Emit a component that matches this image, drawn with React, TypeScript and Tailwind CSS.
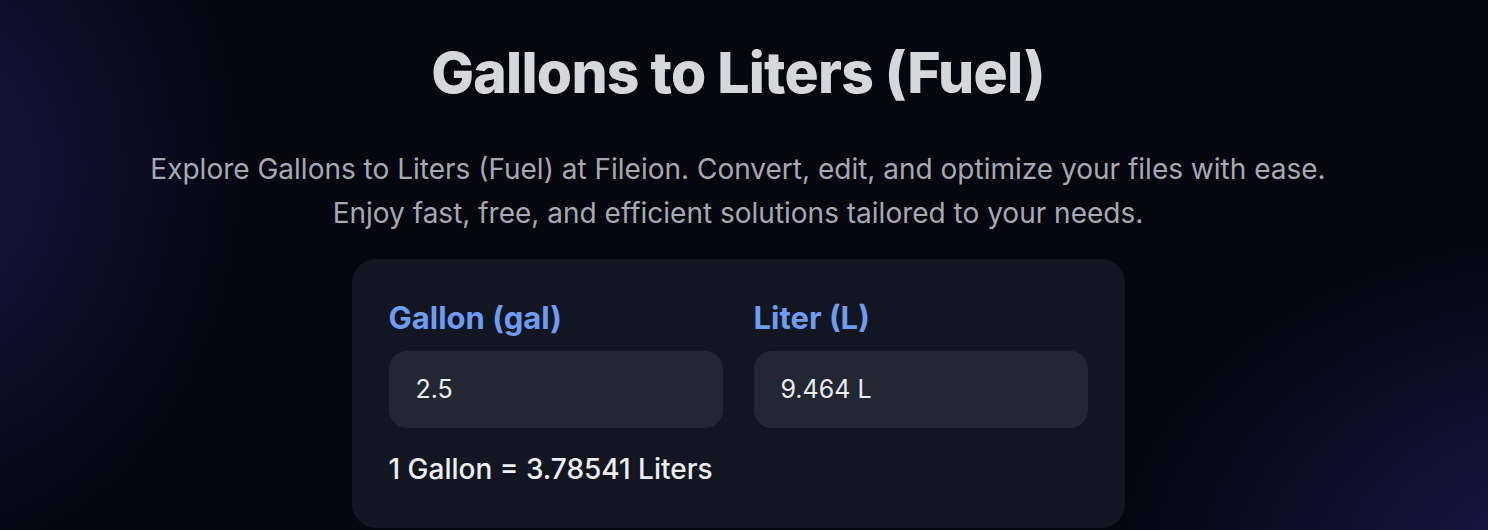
import React from "react";

export default function App() {
  return (
    <div
      className="relative w-full h-[530px] overflow-hidden bg-[#05060f] text-white"
      style={{ fontFamily: "Inter, 'Noto Sans', sans-serif" }}
    >
      <div className="absolute inset-0 bg-[radial-gradient(ellipse_460px_560px_at_-80px_170px,rgba(30,32,95,0.7),transparent_70%)]" />
      <div className="absolute inset-0 bg-[radial-gradient(ellipse_620px_460px_at_1580px_580px,rgba(30,30,92,0.85),transparent_75%)]" />
      <div className="relative flex flex-col items-center pt-[38px] pr-[12px]">
        <h1 className="text-[57px] leading-[70px] font-extrabold text-[#d6d7dd] tracking-[-0.75px]">
          Gallons to Liters (Fuel)
        </h1>
        <p className="mt-[39px] text-[28px] leading-[44px] text-[#a6a9b3] text-center">
          Explore Gallons to Liters (Fuel) at Fileion. Convert, edit, and optimize your files with ease.
          <br />
          Enjoy fast, free, and efficient solutions tailored to your needs.
        </p>
        <div className="mt-[24px] w-[773px] rounded-[24px] bg-[#121621] px-[37px] pt-[39px] pb-[41px]">
          <div className="grid grid-cols-2 gap-x-[31px]">
            <div>
              <div className="text-[31px] leading-[40px] font-bold text-[#6d9cf1]">Gallon (gal)</div>
              <div className="mt-[13px] h-[77px] rounded-[18px] bg-[#222733] flex items-center px-[27px] text-[25px] text-[#eceef2]">
                2.5
              </div>
            </div>
            <div>
              <div className="text-[31px] leading-[40px] font-bold text-[#6d9cf1]">Liter (L)</div>
              <div className="mt-[13px] h-[77px] rounded-[18px] bg-[#222733] flex items-center px-[27px] text-[25px] text-[#eceef2]">
                9.464 L
              </div>
            </div>
          </div>
          <div className="mt-[23px] text-[28px] leading-[36px] font-medium text-[#eceef2]">
            1 Gallon = 3.78541 Liters
          </div>
        </div>
      </div>
    </div>
  );
}
